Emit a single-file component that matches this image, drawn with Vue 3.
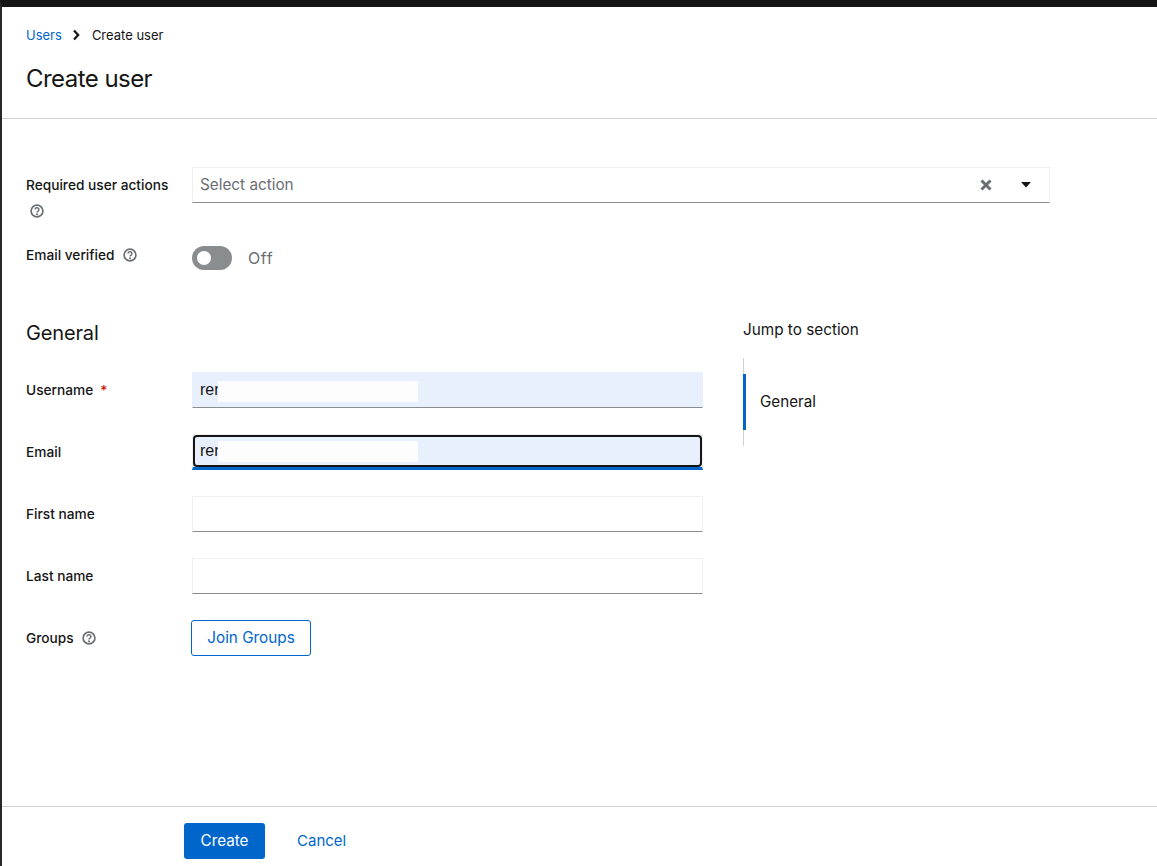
<script setup>
const fields = [
  { label: 'Username', required: true, value: 'ren', filled: true },
  { label: 'Email', value: 'ren', filled: true, focused: true },
  { label: 'First name', value: '' },
  { label: 'Last name', value: '' },
]
</script>

<template>
  <div class="page">
    <header class="head">
      <nav class="crumbs">
        <a class="link">Users</a>
        <svg class="chev" viewBox="0 0 8 12"><path d="M2 1.5 6.2 6 2 10.5" fill="none" stroke="#151515" stroke-width="2.2" /></svg>
        <span>Create user</span>
      </nav>
      <h1>Create user</h1>
    </header>

    <main class="main">
      <div class="row top-row">
        <div class="label wrap">
          <span>Required user actions</span>
          <svg class="help" viewBox="0 0 14 14"><circle cx="7" cy="7" r="5.9" fill="none" stroke="#6a6e73" stroke-width="1.7" /><path d="M5.1 5.6a1.9 1.9 0 1 1 2.9 1.6c-.7.4-1 .7-1 1.4" fill="none" stroke="#6a6e73" stroke-width="1.5" /><circle cx="7" cy="10.3" r="1" fill="#6a6e73" /></svg>
        </div>
        <div class="select">
          <span class="placeholder">Select action</span>
          <svg class="clear" viewBox="0 0 12 12"><path d="M1.5 1.5 10.5 10.5M10.5 1.5 1.5 10.5" stroke="#6a6e73" stroke-width="3" /></svg>
          <svg class="caret" viewBox="0 0 10 6"><path d="M0 0h10L5 5.5z" fill="#151515" /></svg>
        </div>
      </div>

      <div class="row toggle-row">
        <div class="label lifted">
          <span>Email verified</span>
          <svg class="help" viewBox="0 0 14 14"><circle cx="7" cy="7" r="5.9" fill="none" stroke="#6a6e73" stroke-width="1.7" /><path d="M5.1 5.6a1.9 1.9 0 1 1 2.9 1.6c-.7.4-1 .7-1 1.4" fill="none" stroke="#6a6e73" stroke-width="1.5" /><circle cx="7" cy="10.3" r="1" fill="#6a6e73" /></svg>
        </div>
        <div class="toggle-wrap">
          <span class="toggle"><i class="knob"></i></span>
          <span class="off">Off</span>
        </div>
      </div>

      <div class="sections">
        <section class="form">
          <h2>General</h2>
          <div v-for="f in fields" :key="f.label" class="row field-row">
            <div class="label">
              <span>{{ f.label }}</span>
              <span v-if="f.required" class="req">*</span>
            </div>
            <div class="input" :class="{ filled: f.filled, focused: f.focused }">
              <span class="value">{{ f.value }}</span>
              <i v-if="f.filled" class="mask"></i>
            </div>
          </div>
          <div class="row groups-row">
            <div class="label">
              <span>Groups</span>
              <svg class="help" viewBox="0 0 14 14"><circle cx="7" cy="7" r="5.9" fill="none" stroke="#6a6e73" stroke-width="1.7" /><path d="M5.1 5.6a1.9 1.9 0 1 1 2.9 1.6c-.7.4-1 .7-1 1.4" fill="none" stroke="#6a6e73" stroke-width="1.5" /><circle cx="7" cy="10.3" r="1" fill="#6a6e73" /></svg>
            </div>
            <button class="join">Join Groups</button>
          </div>
        </section>

        <aside class="jump">
          <div class="jump-title">Jump to section</div>
          <div class="jump-list">
            <div class="jump-item">General</div>
          </div>
        </aside>
      </div>
    </main>

    <footer class="foot">
      <button class="create">Create</button>
      <a class="cancel">Cancel</a>
    </footer>
  </div>
</template>

<style scoped>
.page {
  box-sizing: border-box;
  width: 1157px;
  height: 866px;
  display: flex;
  flex-direction: column;
  border-top: 7px solid #151515;
  border-left: 2px solid #26292b;
  background: #fff;
  color: #151515;
  font-family: Inter, "Noto Sans", sans-serif;
  font-size: 14px;
  overflow: hidden;
}
.head {
  box-sizing: border-box;
  height: 112px;
  padding: 20px 24px 0;
  border-bottom: 1px solid #d2d2d2;
  flex: none;
}
.crumbs {
  display: flex;
  align-items: center;
  height: 16px;
  font-size: 13px;
}
.link { color: #0066cc; }
.chev { width: 8px; height: 12px; margin: 0 12px 0 10px; }
h1 {
  margin: 20px 0 0;
  font-size: 24px;
  line-height: 32px;
  font-weight: 400;
  letter-spacing: -0.55px;
}
.main {
  flex: 1;
  padding: 48px 0 0 24px;
}
.row {
  display: grid;
  grid-template-columns: 166px 1fr;
}
.label {
  display: flex;
  align-items: center;
  gap: 8px;
  font-size: 13.7px;
  font-weight: 500;
}
.lifted { padding-bottom: 6px; gap: 9px; }
.wrap {
  flex-direction: column;
  align-items: flex-start;
  gap: 11px;
  padding-top: 10px;
}
.wrap .help { margin-left: 4px; }
.help { width: 14px; height: 14px; flex: none; }
.top-row { width: 1024px; }
.select {
  box-sizing: border-box;
  height: 36px;
  display: flex;
  align-items: center;
  padding: 0 18px 0 7px;
  border: 1px solid #f0f0f0;
  border-bottom-color: #8a8d90;
}
.placeholder { flex: 1; color: #6a6e73; font-size: 15.3px; padding-bottom: 1px; }
.clear { width: 12px; height: 12px; margin-right: 29px; }
.caret { width: 10px; height: 6px; }
.toggle-row { margin-top: 28px; width: 1024px; height: 24px; }
.toggle-wrap { display: flex; align-items: center; gap: 16px; }
.toggle {
  display: flex;
  align-items: center;
  width: 40px;
  height: 24px;
  border-radius: 12px;
  background: #8a8d90;
  padding-left: 5px;
  box-sizing: border-box;
}
.knob { width: 14px; height: 14px; border-radius: 50%; background: #fff; }
.off { color: #6a6e73; font-size: 16px; letter-spacing: 0.6px; }
.sections {
  display: flex;
  gap: 40px;
  margin-top: 47px;
}
.form { width: 677px; }
h2 {
  margin: 0 0 23px;
  font-size: 20px;
  line-height: 32px;
  font-weight: 400;
  letter-spacing: -0.15px;
}
.field-row { height: 36px; margin-bottom: 26px; }
.req { color: #c9190b; margin-left: -1px; }
.input {
  position: relative;
  box-sizing: border-box;
  height: 36px;
  display: flex;
  align-items: center;
  padding-left: 7px;
  border: 1px solid #f0f0f0;
  border-bottom-color: #8a8d90;
  font-family: "Liberation Sans", Arial, sans-serif;
  font-size: 16px;
}
.filled {
  background: #e8f0fe;
  border-color: #e8f0fe;
  border-bottom-color: #8a8d90;
}
.focused {
  border-color: #f0f0f0;
  border-bottom: 3px solid #0066cc;
}
.focused::after {
  content: "";
  position: absolute;
  inset: 0;
  border: 2px solid #151515;
  border-radius: 4px;
}
.mask {
  position: absolute;
  left: 25px;
  top: 8px;
  width: 200px;
  height: 21px;
  background: #fdfdfd;
}
.focused .mask { top: 6px; }
.groups-row { align-items: center; }
.join {
  box-sizing: border-box;
  justify-self: start;
  margin-left: -1px;
  width: 120px;
  height: 36px;
  background: #fff;
  border: 1px solid #0066cc;
  border-radius: 3px;
  color: #0066cc;
  font: inherit;
  font-size: 15.3px;
  padding: 0 0 2px;
}
.jump { width: 200px; margin-top: 3px; }
.jump-title { font-size: 15.3px; line-height: 20px; }
.jump-list {
  margin-top: 18px;
  padding: 16px 0;
  height: 88px;
  box-sizing: border-box;
  border-left: 1px solid #d2d2d2;
}
.jump-item {
  box-sizing: border-box;
  height: 56px;
  margin-left: -1px;
  padding: 0 0 2px 14px;
  display: flex;
  align-items: center;
  border-left: 3px solid #0066cc;
  font-size: 15.2px;
}
.foot {
  box-sizing: border-box;
  height: 60px;
  flex: none;
  display: flex;
  align-items: flex-start;
  gap: 32px;
  padding: 16px 0 0 182px;
  border-top: 1px solid #d2d2d2;
}
.create {
  width: 81px;
  height: 36px;
  background: #0066cc;
  border: none;
  border-radius: 3px;
  color: #fff;
  font: inherit;
  font-size: 15.2px;
  padding: 0 0 1px;
}
.cancel {
  color: #0066cc;
  font-size: 15px;
  line-height: 36px;
}
</style>

<style>
html, body { margin: 0; overflow: hidden; background: #fff; }
</style>
